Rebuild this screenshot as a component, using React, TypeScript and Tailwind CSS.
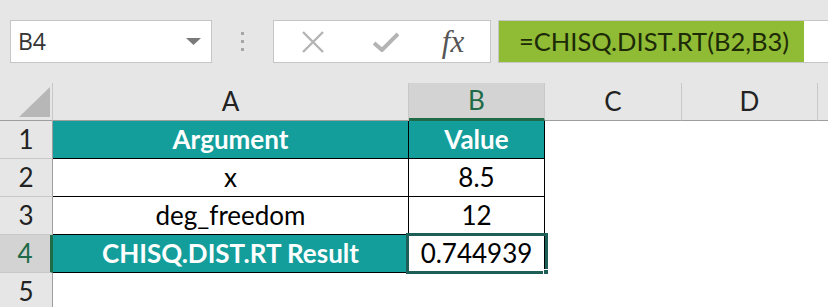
import React from "react";

const teal = "bg-[#139e9b]";

function ToolBar() {
  return (
    <div className="flex h-[83px] items-start bg-[#e6e6e6] pt-[20px] pl-[10px]">
      <div className="flex h-[43px] w-[202px] items-center justify-between border border-[#c6c6c6] bg-white pl-[7px] pr-[10px]">
        <span className="text-[23px] text-[#333] [font-family:'Open_Sans',sans-serif]">B4</span>
        <svg width="15" height="7" viewBox="0 0 15 7">
          <path d="M0 0 L15 0 L7.5 7 Z" fill="#7a7a7a" />
        </svg>
      </div>
      <div className="flex h-[43px] w-[61px] flex-col items-center justify-center gap-[5px]">
        <span className="h-[3px] w-[3px] bg-[#a6a6a6]" />
        <span className="h-[3px] w-[3px] bg-[#a6a6a6]" />
        <span className="h-[3px] w-[3px] bg-[#a6a6a6]" />
      </div>
      <div className="flex h-[43px] w-[218px] items-center border border-[#c6c6c6] bg-white">
        <div className="flex w-[76px] justify-center pl-[2px]">
          <svg width="24" height="22" viewBox="0 0 24 22">
            <path d="M2 1 L22 21 M22 1 L2 21" stroke="#b4b4b4" strokeWidth="2.4" fill="none" />
          </svg>
        </div>
        <div className="flex w-[72px] justify-center">
          <svg width="26" height="20" viewBox="0 0 26 20">
            <path d="M1 11 L9 18 L25 2" stroke="#b4b4b4" strokeWidth="4" fill="none" />
          </svg>
        </div>
        <div className="flex w-[62px] justify-center">
          <span className="text-[31px] italic leading-none text-[#555] [font-family:'Liberation_Serif',serif]">fx</span>
        </div>
      </div>
      <div className="ml-[7px] flex h-[43px] flex-1 border border-r-0 border-[#c6c6c6] bg-white">
        <div className="flex h-full w-[305px] items-center bg-[#8fbb35] pl-[20px]">
          <span className="text-[25.5px] text-[#1d2a08] [font-family:Lato,sans-serif]">=CHISQ.DIST.RT(B2,B3)</span>
        </div>
      </div>
    </div>
  );
}

function ColHeader({ label, active }: { label: string; active?: boolean }) {
  return (
    <div
      className={
        active
          ? "flex h-[38px] items-center justify-center border-b-[3px] border-b-[#1f6b47] border-r border-r-[#c8c8c8] bg-[#d3d3d3] text-[#1f6b47]"
          : "flex h-[38px] items-center justify-center border-b border-b-[#9e9e9e] border-r border-r-[#c8c8c8] bg-[#e6e6e6] text-[#222]"
      }
    >
      <span className="text-[26px] [font-family:Lato,sans-serif]">{label}</span>
    </div>
  );
}

function RowHeader({ n, active }: { n: number; active?: boolean }) {
  return (
    <div
      className={
        active
          ? "flex h-[38px] items-center justify-center border-r-[3px] border-r-[#1f6b47] border-b border-b-[#c8c8c8] bg-[#d3d3d3] text-[#1f6b47]"
          : "flex h-[38px] items-center justify-center border-r border-r-[#9e9e9e] border-b border-b-[#c8c8c8] bg-[#e6e6e6] text-[#222]"
      }
    >
      <span className="text-[26px] [font-family:Lato,sans-serif]">{n}</span>
    </div>
  );
}

export default function App() {
  const cell = "flex h-[38px] items-center justify-center text-[26px] [font-family:Lato,sans-serif]";
  return (
    <div className="h-[307px] w-[828px] overflow-hidden bg-white">
      <ToolBar />
      <div className="relative grid grid-cols-[53px_356px_136px_137px_136px_1fr]">
        <div className="flex h-[38px] items-end justify-end border-b border-b-[#9e9e9e] border-r border-r-[#c8c8c8] bg-[#e6e6e6] pb-[3px] pr-[2px]">
          <svg width="31" height="30" viewBox="0 0 31 30">
            <path d="M31 0 L31 30 L0 30 Z" fill="#b7b7b7" />
          </svg>
        </div>
        <ColHeader label="A" />
        <ColHeader label="B" active />
        <ColHeader label="C" />
        <ColHeader label="D" />
        <div className="h-[38px] border-b border-b-[#9e9e9e] bg-[#e6e6e6]" />

        <RowHeader n={1} />
        <div className={`${cell} ${teal} border-b border-r border-black font-bold text-white`}>Argument</div>
        <div className={`${cell} ${teal} border-b border-r border-black font-bold text-white`}>Value</div>
        <div className="h-[38px]" />
        <div className="h-[38px]" />
        <div className="h-[38px]" />

        <RowHeader n={2} />
        <div className={`${cell} border-b border-r border-black text-black`}>x</div>
        <div className={`${cell} border-b border-r border-black text-black`}>8.5</div>
        <div className="h-[38px]" />
        <div className="h-[38px]" />
        <div className="h-[38px]" />

        <RowHeader n={3} />
        <div className={`${cell} border-b border-r border-black text-black`}>deg_freedom</div>
        <div className={`${cell} border-b border-r border-black text-black`}>12</div>
        <div className="h-[38px]" />
        <div className="h-[38px]" />
        <div className="h-[38px]" />

        <RowHeader n={4} active />
        <div className={`${cell} ${teal} border-b border-r border-black font-bold text-white`}>CHISQ.DIST.RT Result</div>
        <div className={`${cell} relative border-b border-r border-black text-black`}>
          0.744939
          <div className="absolute -top-[2px] -left-[3px] -right-[4px] -bottom-[2px] border-[3px] border-[#1d5f57]" />
          <div className="absolute -right-[5px] -bottom-[3px] h-[6px] w-[6px] border border-white bg-[#1d5f57]" />
        </div>
        <div className="h-[38px]" />
        <div className="h-[38px]" />
        <div className="h-[38px]" />

        <RowHeader n={5} />
        <div className="h-[38px]" />
        <div className="h-[38px]" />
        <div className="h-[38px]" />
        <div className="h-[38px]" />
        <div className="h-[38px]" />
      </div>
    </div>
  );
}
